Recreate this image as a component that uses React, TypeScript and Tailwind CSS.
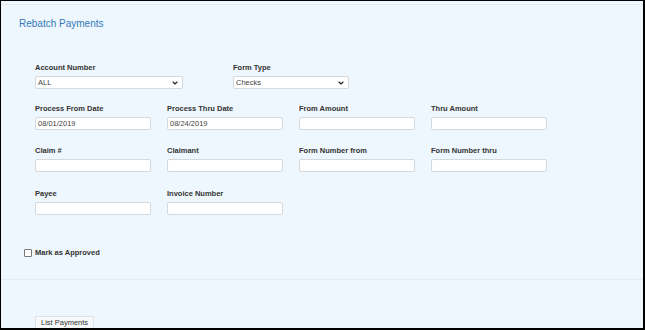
import { ChevronDown } from 'lucide-react'

const font = { fontFamily: '"Liberation Sans", Arial, sans-serif' }

function Label({ children }: { children: string }) {
  return (
    <div className="h-[10px] text-[7.5px] font-bold leading-[10px] text-[#333]">
      {children}
    </div>
  )
}

function TextField({ label, value = '' }: { label: string; value?: string }) {
  return (
    <div className="w-[116px]">
      <Label>{label}</Label>
      <div className="mt-[3px] flex h-[13px] items-center rounded-[2px] border border-[#d4d9de] bg-white px-[2px] text-[7.5px] text-[#444]">
        {value}
      </div>
    </div>
  )
}

function SelectField({ label, value, width }: { label: string; value: string; width: string }) {
  return (
    <div className={width}>
      <Label>{label}</Label>
      <div className="mt-[3px] flex h-[13px] items-center justify-between rounded-[2px] border border-[#d4d9de] bg-white pl-[2px] pr-[3px] text-[7.5px] text-[#444]">
        <span>{value}</span>
        <ChevronDown size={8} strokeWidth={3.5} className="text-[#222]" />
      </div>
    </div>
  )
}

export default function App() {
  return (
    <div
      style={font}
      className="h-[330px] w-[645px] overflow-hidden border-b-2 border-l border-r-2 border-t border-black bg-[#eef6fe]"
    >
      <div className="h-[4px] border-b border-[#e2eaf2]" />
      <h1 className="ml-[18px] mt-[13px] text-[10px] leading-[12px] text-[#3479b8]">
        Rebatch Payments
      </h1>

      <div className="ml-[34px] mt-[33px] flex flex-col">
        <div className="flex gap-[50px]">
          <SelectField label="Account Number" value="ALL" width="w-[148px]" />
          <SelectField label="Form Type" value="Checks" width="w-[116px]" />
        </div>
        <div className="mt-[15px] flex gap-[16px]">
          <TextField label="Process From Date" value="08/01/2019" />
          <TextField label="Process Thru Date" value="08/24/2019" />
          <TextField label="From Amount" />
          <TextField label="Thru Amount" />
        </div>
        <div className="mt-[16px] flex gap-[16px]">
          <TextField label="Claim #" />
          <TextField label="Claimant" />
          <TextField label="Form Number from" />
          <TextField label="Form Number thru" />
        </div>
        <div className="mt-[17px] flex gap-[16px]">
          <TextField label="Payee" />
          <TextField label="Invoice Number" />
        </div>
      </div>

      <div className="ml-[23px] mt-[32px] flex items-center gap-[3px]">
        <span className="h-[8px] w-[8px] rounded-[1px] border border-[#777] bg-white" />
        <span className="text-[7.5px] font-bold text-[#333]">Mark as Approved</span>
      </div>

      <div className="mt-[21px] border-b border-[#e2eaf2]" />

      <button className="ml-[34px] mt-[36px] h-[14px] border border-[#dde3e8] bg-[#f7f8f9] px-[5px] text-[7.5px] leading-[12px] text-[#333]">
        List Payments
      </button>
    </div>
  )
}
